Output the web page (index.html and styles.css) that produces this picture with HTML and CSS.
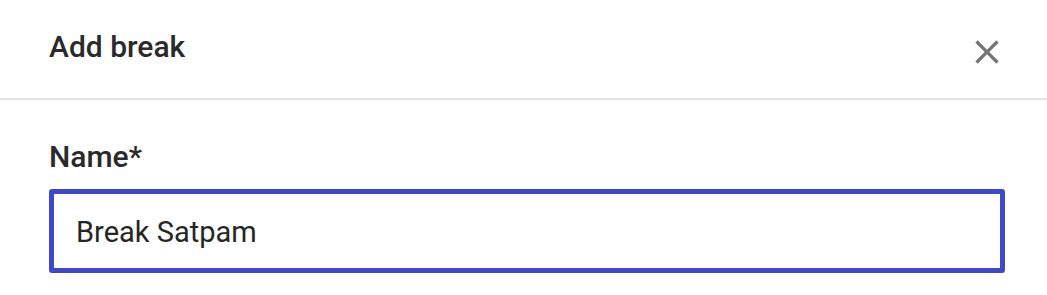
FILE: index.html
```html
<!DOCTYPE html>
<html lang="en">
<head>
<meta charset="utf-8">
<title>Add break</title>
<link rel="stylesheet" href="styles.css">
</head>
<body>
<div class="dialog">
  <header class="dialog-header">
    <h1 class="dialog-title">Add break</h1>
    <button class="close-btn" type="button" aria-label="Close">
      <svg viewBox="0 0 24 24" width="40" height="40"><path fill="#757575" d="M19 6.41L17.59 5 12 10.59 6.41 5 5 6.41 10.59 12 5 17.59 6.41 19 12 13.41 17.59 19 19 17.59 13.41 12z"/></svg>
    </button>
  </header>
  <div class="dialog-body">
    <label class="field-label" for="name">Name*</label>
    <input class="field-input" id="name" type="text" value="Break Satpam">
  </div>
</div>
</body>
</html>
```

FILE: styles.css
```css
html, body {
  margin: 0;
  padding: 0;
  background: #ffffff;
}
body {
  font-family: Roboto, "Noto Sans", "Liberation Sans", sans-serif;
  color: #212121;
}
.dialog-header {
  display: flex;
  justify-content: space-between;
  align-items: flex-start;
  box-sizing: border-box;
  height: 100px;
  padding: 30px 40px 0 49px;
  border-bottom: 2px solid #e3e3e6;
}
.dialog-title {
  margin: 0;
  font-size: 30px;
  font-weight: 500;
  line-height: 34px;
  color: #2a2a2a;
}
.close-btn {
  margin-top: 2px;
  padding: 0;
  border: 0;
  background: none;
  width: 40px;
  height: 40px;
  display: block;
}
.close-btn svg {
  display: block;
}
.dialog-body {
  display: flex;
  flex-direction: column;
  padding: 40px 42px 0 49px;
}
.field-label {
  font-size: 30px;
  font-weight: 500;
  line-height: 34px;
  color: #2a2a2a;
  margin-bottom: 15px;
}
.field-input {
  box-sizing: border-box;
  width: 100%;
  height: 84px;
  margin: 0;
  padding: 2px 0 0 22px;
  border: 5px solid #3f48cc;
  border-radius: 3px;
  outline: none;
  font-family: Roboto, "Noto Sans", "Liberation Sans", sans-serif;
  font-size: 29px;
  font-weight: 400;
  color: #262626;
  background: #ffffff;
}
```
